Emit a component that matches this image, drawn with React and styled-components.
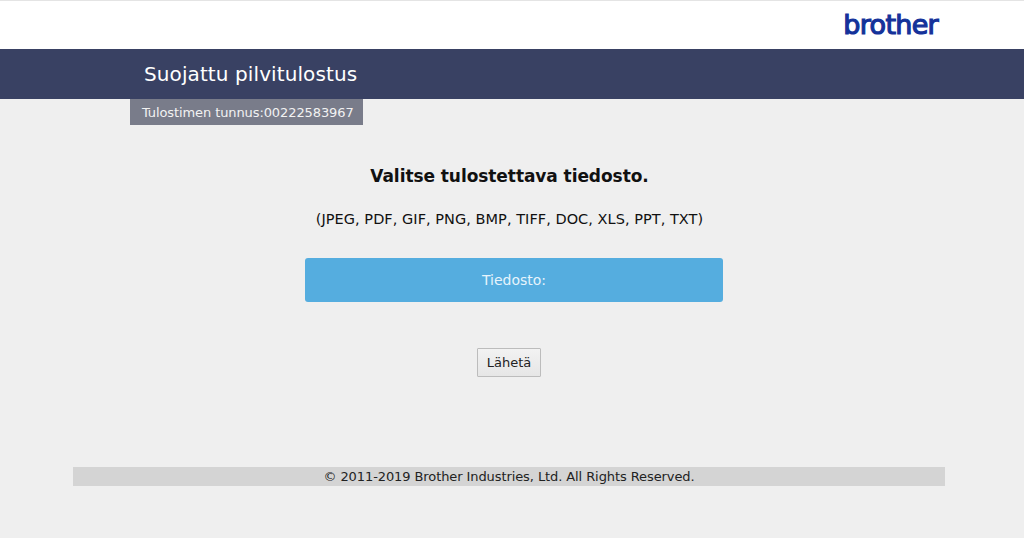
import React from 'react'
import styled, { createGlobalStyle } from 'styled-components'

const GlobalStyle = createGlobalStyle`
  html, body {
    margin: 0;
    padding: 0;
    background: #efefef;
    font-family: "DejaVu Sans", Verdana, sans-serif;
  }
`

const TopBar = styled.header`
  height: 48px;
  background: #ffffff;
  border-top: 1px solid #e4e4e4;
  display: flex;
  justify-content: flex-end;
  align-items: flex-start;
  padding-right: 86px;
`

const Logo = styled.div`
  font-size: 27px;
  line-height: 30px;
  letter-spacing: -0.7px;
  color: #14329a;
  -webkit-text-stroke: 1.2px #14329a;
  margin-top: 9px;
`

const TitleBar = styled.div`
  height: 50px;
  background: #394163;
  padding-left: 144px;
  display: flex;
  align-items: center;
`

const Title = styled.h1`
  margin: 0;
  font-size: 20px;
  font-weight: 400;
  letter-spacing: 0.1px;
  color: #ffffff;
`

const PrinterTag = styled.div`
  width: 221px;
  height: 26px;
  margin-left: 130px;
  padding-left: 12px;
  background: #797c8a;
  color: #f2f2f2;
  font-size: 13px;
  letter-spacing: -0.1px;
  line-height: 27px;
`

const Main = styled.main`
  display: flex;
  flex-direction: column;
  align-items: center;
  padding-right: 5px;
`

const Heading = styled.h2`
  margin: 40px 0 0;
  font-size: 17px;
  line-height: 22px;
  font-weight: 700;
  letter-spacing: -0.07px;
  color: #111111;
`

const Formats = styled.p`
  margin: 22px 0 0;
  font-size: 14.5px;
  line-height: 20px;
  letter-spacing: 0.04px;
  color: #111111;
`

const FileBox = styled.div`
  width: 418px;
  height: 44px;
  margin: 29px 0 0 9px;
  background: #55addf;
  border-radius: 3px;
  color: #e6f4fc;
  font-size: 14px;
  line-height: 44px;
  text-align: center;
`

const SendButton = styled.button`
  width: 64px;
  height: 29px;
  margin: 46px 1px 0 0;
  padding: 0;
  background: linear-gradient(#f2f2f2, #e6e6e6);
  border: 1px solid #bcbcbc;
  border-radius: 1px;
  color: #222222;
  font-family: inherit;
  font-size: 13px;
`

const Footer = styled.footer`
  height: 19px;
  margin: 90px 79px 0 73px;
  background: #d4d4d4;
  color: #222222;
  font-size: 13px;
  letter-spacing: -0.09px;
  line-height: 19px;
  text-align: center;
`

const App = () => {
  return (
    <>
      <GlobalStyle />
      <TopBar>
        <Logo>brother</Logo>
      </TopBar>
      <TitleBar>
        <Title>Suojattu pilvitulostus</Title>
      </TitleBar>
      <PrinterTag>Tulostimen tunnus:00222583967</PrinterTag>
      <Main>
        <Heading>Valitse tulostettava tiedosto.</Heading>
        <Formats>(JPEG, PDF, GIF, PNG, BMP, TIFF, DOC, XLS, PPT, TXT)</Formats>
        <FileBox>Tiedosto:</FileBox>
        <SendButton>Lähetä</SendButton>
      </Main>
      <Footer>© 2011-2019 Brother Industries, Ltd. All Rights Reserved.</Footer>
    </>
  )
}

export default App
